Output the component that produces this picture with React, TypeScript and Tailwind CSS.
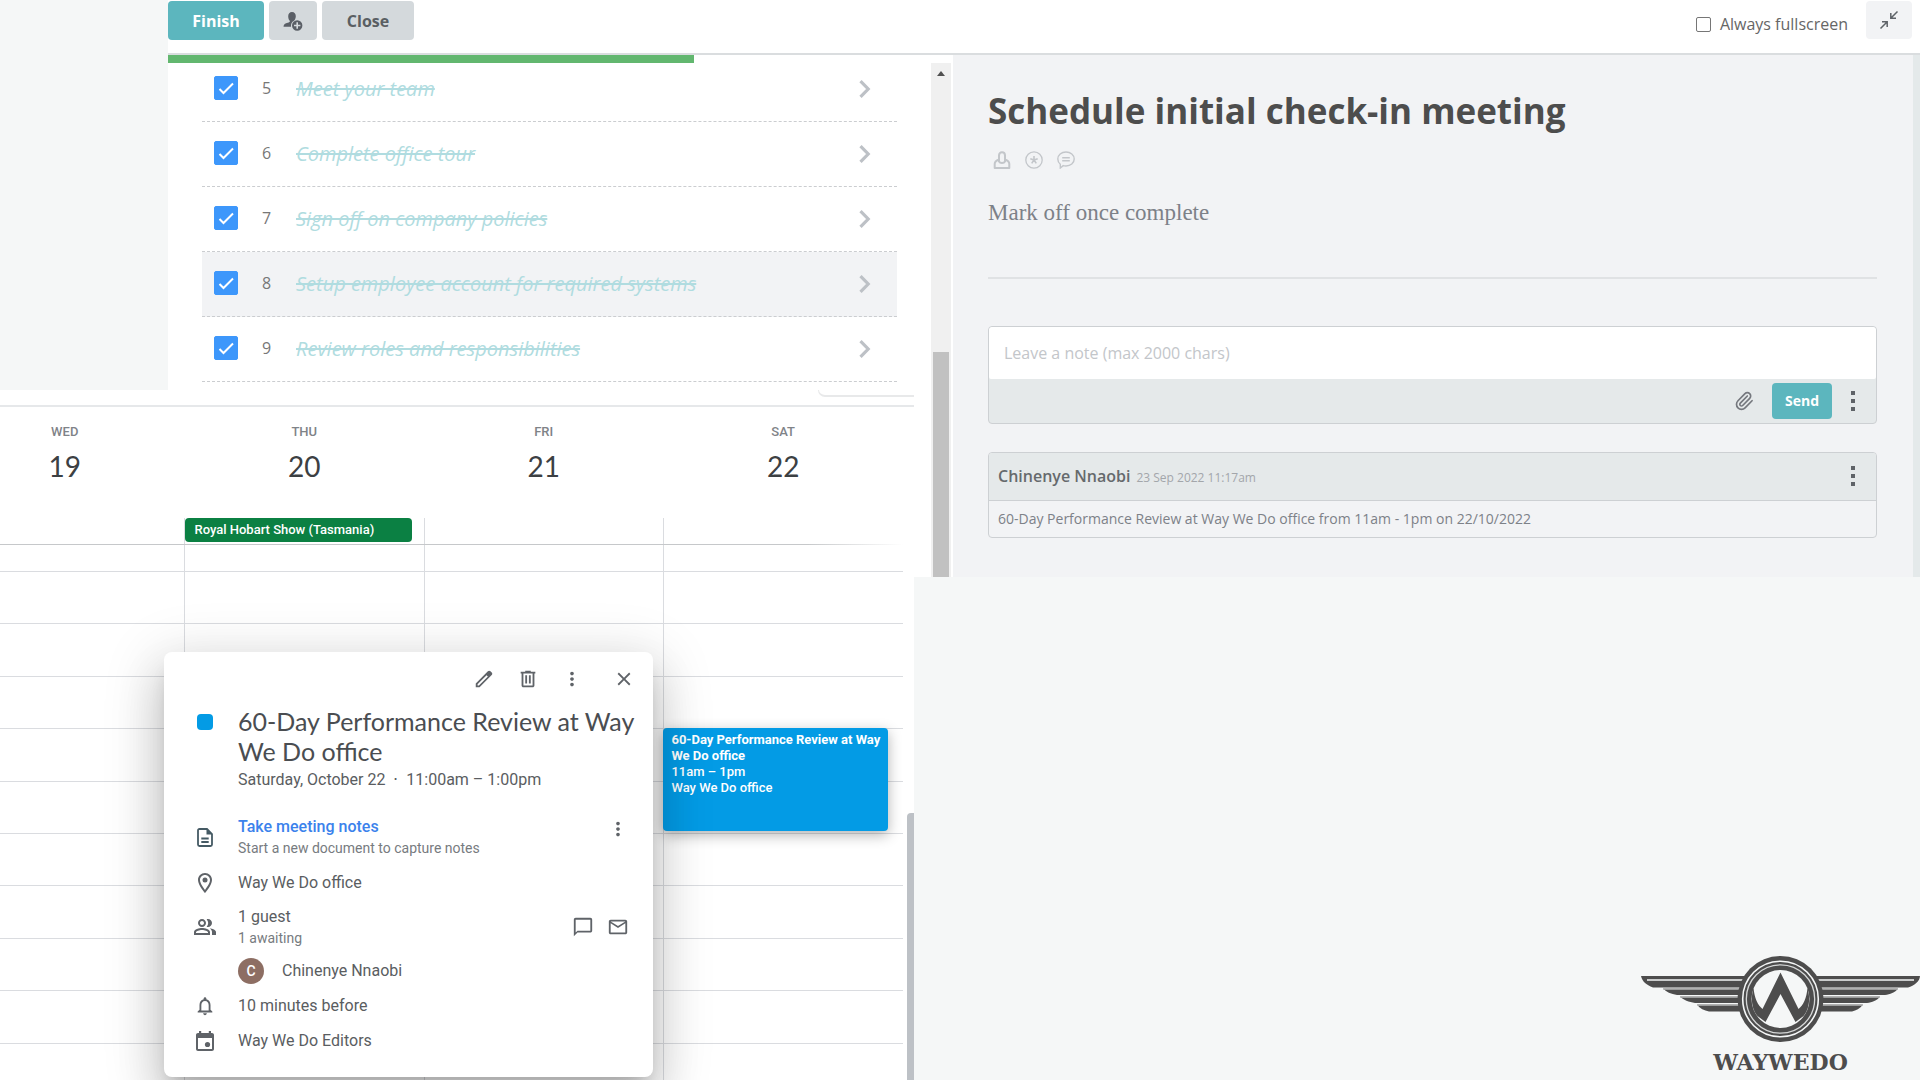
import { useState } from "react";
import clsx from "clsx";
import { Paperclip } from "lucide-react";
import {
    MdChatBubbleOutline,
    MdClose,
    MdMailOutline,
    MdMoreVert,
    MdNotificationsNone,
    MdOutlineLocationOn,
    MdOutlinePeopleAlt,
} from "react-icons/md";

interface Step {
    id: number;
    title: string;
    active?: boolean;
}

const steps: Step[] = [
    { id: 5, title: "Meet your team" },
    { id: 6, title: "Complete office tour" },
    { id: 7, title: "Sign off on company policies" },
    { id: 8, title: "Setup employee account for required systems", active: true },
    { id: 9, title: "Review roles and responsibilities" },
];

const days = [
    { name: "WED", date: 19 },
    { name: "THU", date: 20, allDay: "Royal Hobart Show (Tasmania)" },
    { name: "FRI", date: 21 },
    { name: "SAT", date: 22, hasReview: true },
];

const hours = Array.from({ length: 10 }, (_, index) => index);

const UserAddIcon = () => (
    <svg viewBox="0 0 20 20" className="size-5" fill="currentColor" aria-hidden="true">
        <path d="M9 1c2.400 0 3.800 1.700 3.800 4.200 0 1.800-.7 3.500-1.800 4.500-1.800.9-3 2.700-3 4.800 0 .5 0 .8.100 1.200H.5c0-2.400 1.700-3.100 4.300-3.900 1.300-.4 2.200-.8 2.200-1.700-1.100-1-1.800-2.700-1.800-4.900C5.200 2.700 6.600 1 9 1z" />
        <path fillRule="evenodd" d="M14.200 9.300a5.200 5.200 0 1 1 0 10.400 5.200 5.200 0 0 1 0-10.400zm-.8 2v2.400H11v1.600h2.400v2.400H15v-2.400h2.400v-1.600H15v-2.400z" />
    </svg>
);

const CompressIcon = () => (
    <svg viewBox="0 0 20 20" className="size-5" fill="none" stroke="currentColor" strokeWidth="1.500" aria-hidden="true">
        <path d="M18.500 1.500 12 8M11.800 3v5.200H17M1.500 18.500 8 12M3 11.800h5.200V17" />
    </svg>
);

const ChevronIcon = () => (
    <svg viewBox="0 0 12 18" className="h-[18px] w-3" fill="none" stroke="currentColor" strokeWidth="3.200" aria-hidden="true">
        <path d="M1.500 1.200 9.200 9l-7.700 7.800" />
    </svg>
);

const StampIcon = () => (
    <svg viewBox="0 0 18 18" className="size-[18px]" fill="none" stroke="currentColor" strokeWidth="2" strokeLinejoin="round" aria-hidden="true">
        <path d="M6 4.500C6 2.500 7.200 1.200 9 1.200s3 1.300 3 3.300v6c-.5 1-1.500 1.600-3 1.600s-2.500-.6-3-1.600z" />
        <path d="M6 8.500c-2.600.8-4.300 2.300-4.300 4.500v4h14.600v-4c0-2.200-1.700-3.700-4.300-4.500" />
    </svg>
);

const StarCircleIcon = () => (
    <svg viewBox="0 0 18 18" className="size-[18px]" fill="none" stroke="currentColor" aria-hidden="true">
        <circle cx="9" cy="9" r="8.200" strokeWidth="1.300" />
        <path d="M9 5v4m0 0L5.300 7.800M9 9l3.700-1.200M9 9l-2.300 3.400M9 9l2.300 3.400" strokeWidth="1.600" />
    </svg>
);

const CommentIcon = () => (
    <svg viewBox="0 0 18 18" className="size-[18px]" fill="none" stroke="currentColor" strokeWidth="1.400" aria-hidden="true">
        <path d="M9 1c4.600 0 8.200 2.900 8.200 7S13.600 15 9 15c-1 0-1.900-.1-2.800-.4L3.300 17v-3.700C1.700 12 .8 10.200.8 8 .8 3.900 4.400 1 9 1z" />
        <path d="M5.200 6.700h7.600M5.200 9.700h7.600" />
    </svg>
);

const DotsIcon = () => (
    <svg viewBox="0 0 4 20" className="h-5 w-1" fill="currentColor" aria-hidden="true">
        <path d="M0 0h4v4H0zM0 8h4v4H0zM0 16h4v4H0z" />
    </svg>
);

const PencilIcon = () => (
    <svg viewBox="0 0 24 24" className="size-[22px]" fill="currentColor" aria-hidden="true">
        <path d="M20.410 4.940l-1.350-1.350c-.78-.78-2.050-.78-2.830 0L3 16.820V21h4.180L20.410 7.770c.79-.78.79-2.050 0-2.830zm-14 14.120L5 19v-1.360l9.820-9.820 1.410 1.410-9.820 9.830z" />
    </svg>
);

const TrashIcon = () => (
    <svg viewBox="0 0 24 24" className="size-[22px]" fill="currentColor" aria-hidden="true">
        <path d="M15 4V3H9v1H4v2h1v13c0 1.100.9 2 2 2h10c1.100 0 2-.9 2-2V6h1V4h-5zm2 15H7V6h10v13z" />
        <path d="M9 8h2v9H9zM13 8h2v9h-2z" />
    </svg>
);

const DocumentIcon = () => (
    <svg viewBox="0 0 16 19" className="h-[19px] w-4" fill="none" stroke="#455a64" strokeWidth="1.800" aria-hidden="true">
        <path d="M10 1H2.500C1.600 1 1 1.600 1 2.500v14c0 .9.600 1.500 1.500 1.500h11c.9 0 1.500-.6 1.500-1.500V6z" />
        <path d="M9.500 1v5.500H15z" fill="#455a64" stroke="none" />
        <path d="M4.300 10.500h7.400M4.300 14h7.400" />
    </svg>
);

const CalendarIcon = () => (
    <svg viewBox="0 0 18 20" className="h-5 w-[18px]" fill="currentColor" aria-hidden="true">
        <path fillRule="evenodd" d="M3 0h2.200v2h7.600V0H15v2h1c1.100 0 2 .9 2 2v14c0 1.100-.9 2-2 2H2c-1.100 0-2-.9-2-2V4c0-1.100.9-2 2-2h1zM2 7v11h14V7z" />
        <circle cx="11.500" cy="13.500" r="2.600" />
    </svg>
);

const WayWeDoLogo = () => (
    <div className="flex w-[279px] flex-col items-center text-[#4d4d4d]">
        <svg viewBox="0 0 279 88" className="w-full" role="img" aria-label="Way We Do">
            <g fill="currentColor">
                <path d="M0 20h279c0 5-6 10-12 11.500H12C5 29 1 25 0 20z" />
                <path d="M22 32.500h235c-3 4-8 6-13 6.500H36c-6-1-11-3-14-6.500z" />
                <path d="M39 40.500h200c-3 4-8 6-13 6.500H54c-6-1-12-3-15-6.500z" />
                <path d="M56 48.500h166c-3 4-7 6-11 7H68c-5-1-9-3-12-7z" />
            </g>
            <g fill="none" stroke="#f5f7f7">
                <path d="M6 24h267" strokeWidth="1.600" />
                <path d="M22 33h235M39 41h200M56 49h166" stroke="#b5b7b7" strokeWidth="1.500" />
            </g>
            <circle cx="139.500" cy="43" r="43" fill="currentColor" />
            <circle cx="139.500" cy="43" r="37.800" fill="none" stroke="#f5f7f7" strokeWidth="1.600" />
            <circle cx="139.500" cy="43" r="34.200" fill="none" stroke="#d5d7d7" strokeWidth="1.300" />
            <circle cx="139.500" cy="43" r="29" fill="#f5f7f7" />
            {/* The W fills the lower part of the disc, with side horns running up its rim */}
            <path
                d="M139.500 16.500 157.500 53c5-4 8-11 9-21 3.500 12 1 22-4 28l-8 6-15-28-15 28-8-6c-5-6-7.500-16-4-28 1 10 4 17 9 21z"
                fill="currentColor"
            />
        </svg>
        <span className="mt-2 font-['DejaVu_Serif',serif] text-[22px] leading-5 font-bold">WAYWEDO</span>
    </div>
);

const StepRow = ({ step }: { step: Step }) => {
    const [checked, setChecked] = useState(true);

    return (
        <li
            className={clsx(
                "flex h-[65px] items-center border-b border-dashed border-[#cbcdd0] pr-[26px] pb-[3px] pl-3",
                step.active && "bg-[#f2f3f5]"
            )}>
            <span className="relative size-6">
                <input
                    id={`step-${step.id}`}
                    type="checkbox"
                    checked={checked}
                    onChange={(e) => setChecked(e.target.checked)}
                    className="peer size-6 appearance-none rounded-xs border border-[#3d97fb] checked:bg-[#3d97fb]"
                />
                <svg viewBox="0 0 24 24" fill="none" stroke="#fff" strokeWidth="2" className="pointer-events-none absolute inset-0 hidden size-6 peer-checked:block" aria-hidden="true">
                    <path d="m5.500 13 4 4 9.500-9.500" />
                </svg>
            </span>
            <span className="w-[58px] pl-6 text-base text-[#777]">{step.id}</span>
            <label
                htmlFor={`step-${step.id}`}
                className="flex-1 pt-0.5 text-[20px] leading-7 text-[#b0dce0] italic line-through">
                {step.title}
            </label>
            <a href="#step" aria-label={`Open step ${step.id}`} className="pt-0.5 text-[#bdc1c6]">
                <ChevronIcon />
            </a>
        </li>
    );
};

const ProcessHeader = () => (
    <header className="flex h-[55px] items-start justify-between border-b-2 border-[#dadddf] pt-px pr-2">
        <div className="flex items-start gap-[5px]">
            <button type="button" className="h-[39px] w-24 rounded bg-[#5cb6be] text-base leading-5 font-bold text-white">
                Finish
            </button>
            <button type="button" aria-label="Add person" className="flex h-[39px] w-12 items-center justify-center rounded bg-[#d4d9dc] text-[#5a5f66]">
                <UserAddIcon />
            </button>
            <button type="button" className="h-[39px] w-[92px] rounded bg-[#d4d9dc] text-base leading-5 font-bold text-[#5a5f63]">
                Close
            </button>
        </div>
        <div className="flex items-start gap-[18px]">
            <label className="flex items-center gap-[9px] pt-[11px] text-base leading-6 text-[#666]">
                <input type="checkbox" className="size-[15px] appearance-none rounded-xs border border-[#767676] bg-white" />
                Always fullscreen
            </label>
            <button type="button" aria-label="Exit fullscreen" className="flex h-[38px] w-[46px] items-center justify-center rounded bg-[#f2f3f5] text-[#5f6368]">
                <CompressIcon />
            </button>
        </div>
    </header>
);

const StepList = () => (
    <div className="relative flex pl-[34px]">
        <div className="absolute top-0 left-0 h-2 w-[67%] bg-[#62b76f]" />
        <ul className="flex-1 pt-0.5">
            {steps.map(step => (
                <StepRow key={step.id} step={step} />
            ))}
        </ul>
        {/* Scroll track */}
        <div className="mt-2 mr-0.5 ml-[34px] flex w-5 flex-col items-center justify-between bg-[#f0f0f0] pt-2">
            <svg viewBox="0 0 8 5" className="h-[5px] w-2 fill-[#505050]" aria-hidden="true">
                <path d="M4 0l4 5H0z" />
            </svg>
            <div className="h-[225px] w-4 bg-[#c1c1c1]" />
        </div>
    </div>
);

const StepDetail = () => (
    <div className="border-r-[7px] border-[#e4e9ea] bg-[#f2f3f5] pr-9 pl-[35px]">
        <h1 className="pt-8 text-[35px] leading-[48px] font-bold text-[#4d4d4d]">
            Schedule initial check-in meeting
        </h1>
        <div className="mt-4 flex gap-[14px] pl-[5px] text-[#c3c6ca]">
            <StampIcon />
            <StarCircleIcon />
            <CommentIcon />
        </div>
        <p className="mt-7 font-['Liberation_Serif',serif] text-[23px] leading-8 text-[#7d8188]">
            Mark off once complete
        </p>
        <hr className="mt-12 border-t-2 border-[#e0e2e4]" />
        <form className="mt-[47px] overflow-hidden rounded border border-[#cdd0d3] bg-[#e5e9ea]">
            <input
                type="text"
                maxLength={2000}
                aria-label="Leave a note"
                placeholder="Leave a note (max 2000 chars)"
                className="block h-[52px] w-full rounded-xs bg-white px-[15px] text-base placeholder:text-[#c3c6ca]"
            />
            <div className="flex h-11 items-center justify-end pr-[21px]">
                <button type="button" aria-label="Attach file" className="mr-[18px] text-[#75787e]">
                    <Paperclip className="size-5" strokeWidth={2} />
                </button>
                <button type="button" className="mr-[19px] h-9 w-[60px] rounded-sm bg-[#5cb6be] text-sm font-bold text-white">
                    Send
                </button>
                <button type="button" aria-label="Note options" className="text-[#5f6368]">
                    <DotsIcon />
                </button>
            </div>
        </form>
        <article className="mt-7 overflow-hidden rounded border border-[#cdd0d3]">
            <header className="flex h-12 items-center border-b border-[#cdd0d3] bg-[#e5e9ea] pr-[21px] pb-px pl-[9px]">
                <h2 className="text-base font-semibold text-[#666a6d]">Chinenye Nnaobi</h2>
                <time dateTime="2022-09-23T11:17" className="ml-[6px] pt-1 text-xs text-[#a3a6aa]">
                    23 Sep 2022 11:17am
                </time>
                <button type="button" aria-label="Comment options" className="ml-auto text-[#5f6368]">
                    <DotsIcon />
                </button>
            </header>
            <p className="px-[9px] py-2 text-sm text-[#7d8188]">
                60-Day Performance Review at Way We Do office from 11am - 1pm on 22/10/2022
            </p>
        </article>
    </div>
);

const EventDetails = () => (
    <div
        role="dialog"
        aria-label="Event details"
        className="absolute top-[262px] left-[164px] h-[425px] w-[489px] rounded-lg bg-white pr-[18px] pl-[29px] text-base text-[#5a5d61] shadow-[0_28px_46px_4px_rgba(0,0,0,0.14),0_11px_56px_10px_rgba(0,0,0,0.12),0_13px_18px_-8px_rgba(0,0,0,0.2)]">
        <div className="flex h-[54px] items-center justify-end gap-[22px] text-[#5f6368]">
            <button type="button" aria-label="Edit event"><PencilIcon /></button>
            <button type="button" aria-label="Delete event"><TrashIcon /></button>
            <button type="button" aria-label="Options"><MdMoreVert className="size-[22px]" /></button>
            <button type="button" aria-label="Close" className="ml-2"><MdClose className="size-[22px]" /></button>
        </div>
        <div className="flex">
            <span className="mt-2 mr-6 ml-1 size-4 rounded bg-[#039be5]" />
            <div className="-mr-3 flex-1 pl-[1px]">
                <h2 className="font-['Lato',sans-serif] text-[25px] leading-[30px] text-[#4a4d51]">
                    60-Day Performance Review at Way We Do office
                </h2>
                <p className="mt-0.5 leading-6">Saturday, October 22 &nbsp;⋅&nbsp; 11:00am – 1:00pm</p>
            </div>
        </div>
        <div className="mt-6 flex items-center">
            <span className="flex w-[45px] pl-1"><DocumentIcon /></span>
            <div className="flex-1">
                <a href="#notes" className="block leading-[22px] font-medium text-[#3b82ec]">Take meeting notes</a>
                <p className="text-sm leading-5 text-[#777b80]">Start a new document to capture notes</p>
            </div>
            <button type="button" aria-label="Notes options" className="mr-1.5 mb-4 text-[#5f6368]">
                <MdMoreVert className="size-[22px]" />
            </button>
        </div>
        <div className="mt-[11px] flex h-7 items-center">
            <span className="flex w-[45px]"><MdOutlineLocationOn className="size-6 text-[#5f6368]" /></span>
            Way We Do office
        </div>
        <div className="mt-[9px] flex items-center">
            <span className="flex w-[45px]"><MdOutlinePeopleAlt className="size-6 text-[#5f6368]" /></span>
            <div className="flex-1">
                <p className="leading-[22px]">1 guest</p>
                <p className="text-sm leading-5 text-[#777b80]">1 awaiting</p>
            </div>
            <div className="mr-1.5 flex gap-[13px] text-[#5f6368]">
                <button type="button" aria-label="Message guests"><MdChatBubbleOutline className="size-[22px]" /></button>
                <button type="button" aria-label="Email guests"><MdMailOutline className="size-[22px]" /></button>
            </div>
        </div>
        <div className="mt-[9px] flex h-7 items-center pl-[45px]">
            <span className="mr-[18px] flex size-[26px] items-center justify-center rounded-full bg-[#8d6e63] text-sm font-medium text-white">
                C
            </span>
            Chinenye Nnaobi
        </div>
        <div className="mt-[7px] flex h-7 items-center">
            <span className="flex w-[45px] pl-px"><MdNotificationsNone className="size-[22px] text-[#5f6368]" /></span>
            10 minutes before
        </div>
        <div className="mt-[7px] flex h-7 items-center">
            <span className="flex w-[45px] pl-[3px] text-[#5f6368]"><CalendarIcon /></span>
            Way We Do Editors
        </div>
    </div>
);

const Calendar = () => (
    <section className="relative h-[690px] w-[47.6%] overflow-hidden bg-white font-['Roboto',sans-serif]">
        <div className="flex h-[17px] justify-end border-b-2 border-[#e6e8ea]">
            <div className="h-[7px] w-24 rounded-bl-lg border-b-2 border-l border-[#e8e9ea]" />
        </div>
        <div className="mr-[11px] -ml-[55px]">
            <div className="grid h-[111px] grid-cols-4 pt-[17px] text-center">
                {days.map(day => (
                    <div key={day.name}>
                        <p className="text-[13px] leading-4 font-medium text-[#7f8388]">{day.name}</p>
                        <p className="mt-1.5 font-['Lato',sans-serif] text-[28px] leading-10 text-[#3c4043]">{day.date}</p>
                    </div>
                ))}
            </div>
            <div className="grid h-[26px] grid-cols-4">
                {days.map(day => (
                    <div key={day.name} className="border-l border-[#dadce0] pr-3">
                        {day.allDay && (
                            <button type="button" className="block h-6 w-full rounded bg-[#0b8043] px-[9px] text-left text-[13px] font-medium text-white">
                                {day.allDay}
                            </button>
                        )}
                    </div>
                ))}
            </div>
            <div className="h-px bg-linear-to-r from-[#c6c8ca] from-90% to-transparent" />
            <div className="grid grid-cols-4">
                {days.map(day => (
                    <div key={day.name} className="relative border-l border-[#dadce0]">
                        <div className="h-[27px] border-b border-[#dadce0]" />
                        <div className="grid h-[524px] grid-rows-10">
                            {hours.map(hour => (
                                <div key={hour} className="border-b border-[#dadce0]" />
                            ))}
                        </div>
                        {day.hasReview && (
                            <button
                                type="button"
                                className="absolute top-[183px] right-[15px] -left-px flex h-[103px] flex-col items-start rounded bg-[#039be5] pt-1 pl-2 text-left text-[13px] leading-4 font-medium text-white shadow-[0_4px_14px_rgba(0,0,0,0.3)]">
                                <span className="font-bold">60-Day Performance Review at Way We Do office</span>
                                <span>11am – 1pm</span>
                                <span>Way We Do office</span>
                            </button>
                        )}
                    </div>
                ))}
            </div>
        </div>
        <div className="absolute right-0 bottom-0 h-[267px] w-[7px] rounded-tl bg-[#bdc1c6]" />
        <EventDetails />
    </section>
);

export default function App() {
    return (
        <div className="min-h-screen bg-[#f5f7f7] font-['Open_Sans',sans-serif]">
            <main className="ml-[168px] grid h-[577px] grid-rows-[55px_1fr] bg-white">
                <ProcessHeader />
                <div className="grid grid-cols-[785fr_967fr]">
                    <StepList />
                    <StepDetail />
                </div>
            </main>
            {/* Calendar window sits over the lower left of the process */}
            <div className="relative -mt-[187px] flex items-end justify-between">
                <Calendar />
                <div className="pb-2">
                    <WayWeDoLogo />
                </div>
            </div>
        </div>
    );
}
